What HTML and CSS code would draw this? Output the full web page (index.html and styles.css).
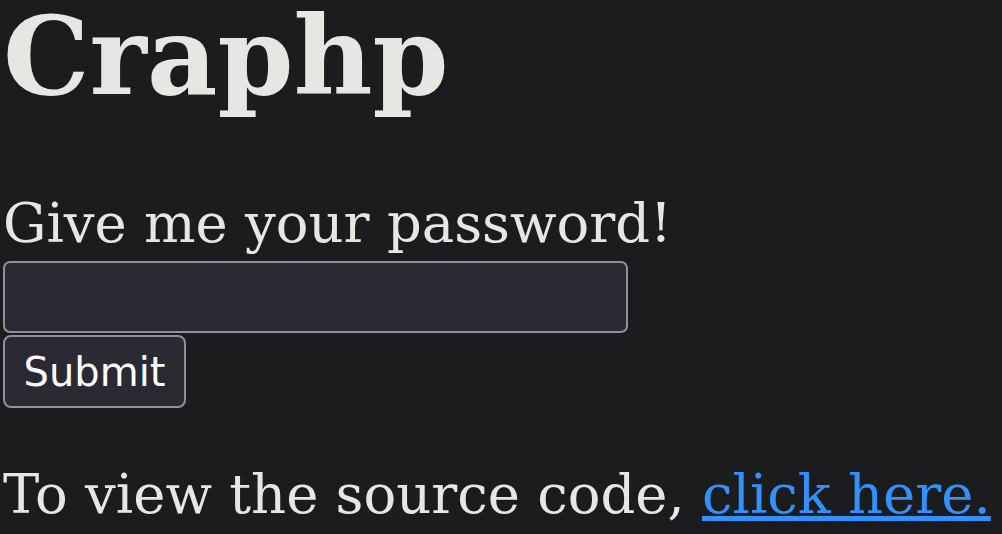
FILE: index.html
```html
<!DOCTYPE html>
<html>
<head>
<meta charset="utf-8">
<title>Craphp</title>
<link rel="stylesheet" href="styles.css">
</head>
<body>
<h1 class="title">Craphp</h1>
<form class="form">
<label class="prompt" for="pw">Give me your password!</label>
<input class="field" id="pw" type="password" name="password">
<button class="submit" type="submit">Submit</button>
</form>
<p class="source">To view the source code, <a class="link" href="#">click here.</a></p>
</body>
</html>
```

FILE: styles.css
```css
html, body {
  margin: 0;
  background: #1b1c1e;
}
body {
  padding: 0 0 0 3px;
  color: #e8e6e3;
  font-family: "DejaVu Serif", serif;
  font-size: 54.4px;
}
.title {
  margin: 0;
  font-size: 108.8px;
  font-weight: bold;
  line-height: 112px;
}
.form {
  margin: 80px 0 0 0;
  display: flex;
  flex-direction: column;
  align-items: flex-start;
}
.prompt {
  line-height: 63px;
}
.field {
  box-sizing: border-box;
  width: 625px;
  height: 72px;
  margin: 6px 0 0 0;
  background: #2b2a33;
  border: 2.5px solid #8f8f9d;
  border-radius: 7px;
  color: #e8e6e3;
}
.submit {
  box-sizing: border-box;
  margin: 2px 0 0 0;
  width: 183px;
  height: 73px;
  padding: 0;
  background: #2b2a33;
  border: 2.5px solid #8f8f9d;
  border-radius: 8px;
  color: #fbfbfe;
  font-family: "DejaVu Sans", sans-serif;
  font-size: 40px;
}
.source {
  margin: 55px 0 0 0;
  line-height: 63px;
}
.link {
  color: #3391ff;
}
```
